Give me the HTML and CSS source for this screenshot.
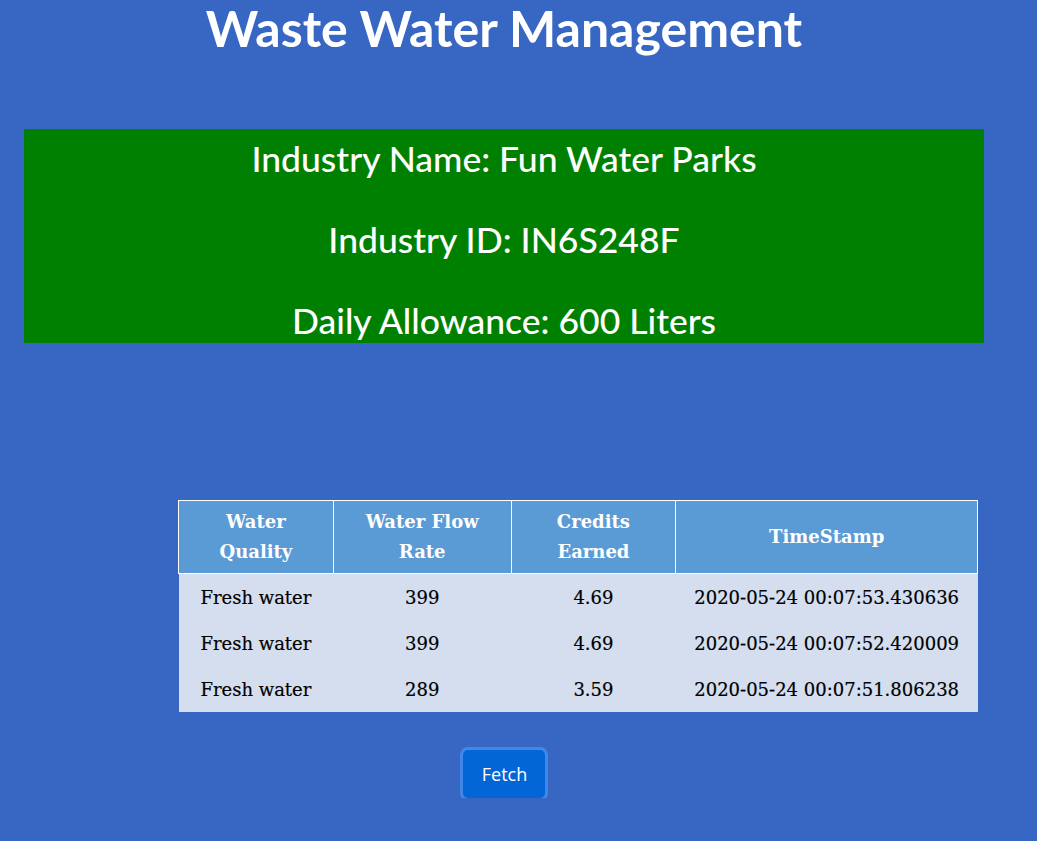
FILE: index.html
```html
<!DOCTYPE html>
<html>
<head>
<meta charset="utf-8">
<link rel="stylesheet" href="styles.css">
</head>
<body>
<div class="page">
  <h1 class="title">Waste Water Management</h1>
  <div class="info">
    <h2 class="info-line">Industry Name: Fun Water Parks</h2>
    <h2 class="info-line">Industry ID: IN6S248F</h2>
    <h2 class="info-line">Daily Allowance: 600 Liters</h2>
  </div>
  <div class="table-wrap">
    <table class="data">
      <thead>
        <tr>
          <th class="c1">Water<br>Quality</th>
          <th class="c2">Water Flow<br>Rate</th>
          <th class="c3">Credits<br>Earned</th>
          <th class="c4">TimeStamp</th>
        </tr>
      </thead>
      <tbody>
        <tr><td>Fresh water</td><td>399</td><td>4.69</td><td>2020-05-24 00:07:53.430636</td></tr>
        <tr><td>Fresh water</td><td>399</td><td>4.69</td><td>2020-05-24 00:07:52.420009</td></tr>
        <tr><td>Fresh water</td><td>289</td><td>3.59</td><td>2020-05-24 00:07:51.806238</td></tr>
      </tbody>
    </table>
  </div>
  <div class="actions">
    <button class="btn">Fetch</button>
  </div>
</div>
</body>
</html>
```

FILE: styles.css
```css
html, body {
  margin: 0;
  padding: 0;
  background: #3867c3;
}
body {
  font-family: "Lato", "Open Sans", sans-serif;
  color: #fff;
}
.page {
  width: 960px;
  margin-left: 24px;
}
.title {
  margin: 0;
  height: 129px;
  text-align: center;
  font-size: 50px;
  line-height: 56px;
  font-weight: 700;
}
.info {
  background: #008000;
  height: 214px;
  padding-top: 9px;
  box-sizing: border-box;
  text-align: center;
}
.info-line {
  margin: 0 0 40px;
  font-size: 35.5px;
  line-height: 41px;
  font-weight: 500;
}
.table-wrap {
  padding-left: 154px;
  padding-top: 157px;
}
.data {
  width: 800px;
  border-collapse: collapse;
  font-family: "DejaVu Serif", "Liberation Serif", serif;
  font-size: 18px;
  color: #000;
}
.data th {
  background: #5b9bd5;
  color: #fff;
  border: 1px solid #fff;
  font-weight: 700;
  height: 73px;
  box-sizing: border-box;
  line-height: 30px;
  padding: 0;
}
.c1 { width: 155px; }
.c2 { width: 178px; }
.c3 { width: 165px; }
.c4 { width: 302px; }
.data td {
  background: #d4deef;
  text-align: center;
  height: 46px;
  padding: 0;
  font-weight: 500;
  -webkit-text-stroke: 0.2px #000;
}
.actions {
  display: flex;
  justify-content: center;
  padding-top: 38px;
}
.btn {
  font-family: "Open Sans", sans-serif;
  font-size: 18px;
  line-height: 24px;
  color: #fff;
  background: #0366d6;
  border: none;
  border-radius: 5px;
  padding: 12px 18px 12px 19px;
  box-shadow: 0 0 0 3px #3f88ea;
}
```
